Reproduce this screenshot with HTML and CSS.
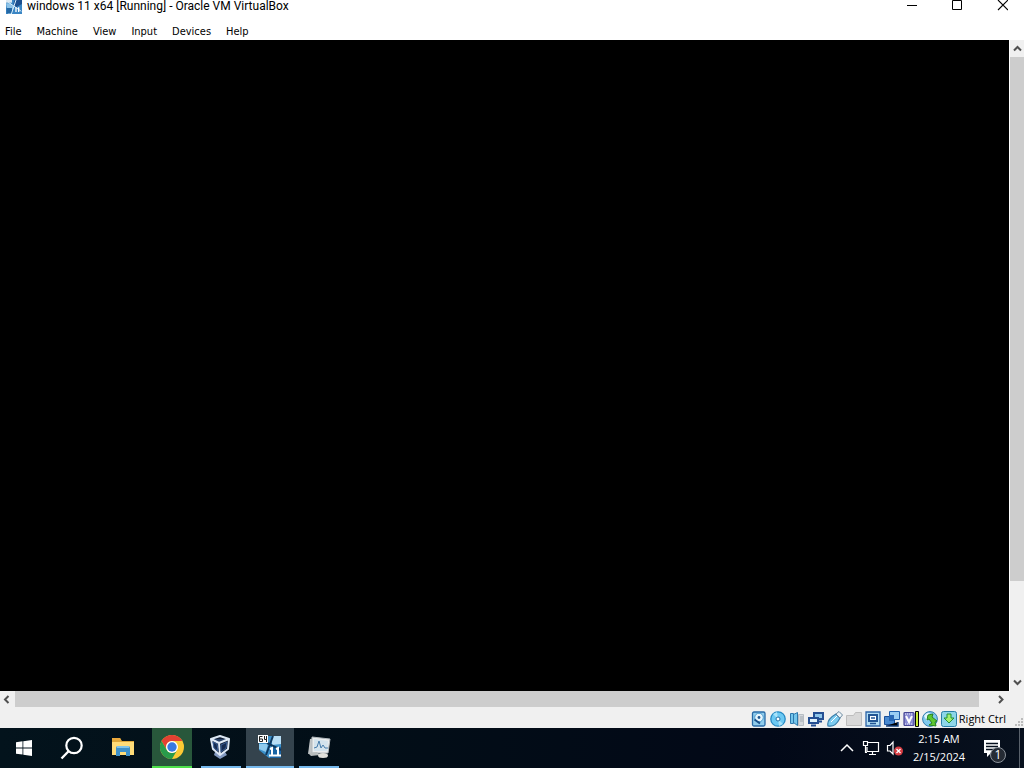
FILE: index.html
```
<!DOCTYPE html>
<html lang="en">
<head>
<meta charset="utf-8">
<title>windows 11 x64 [Running] - Oracle VM VirtualBox</title>
<link rel="stylesheet" href="styles.css">
</head>
<body>
<div class="desktop">
  <header class="titlebar">
    <svg class="title-icon" width="16" height="16" viewBox="0 0 24 24"><path fill="#3b86c4" d="M0 0h24v24H0z"/><path fill="#8fc4e8" d="M0 8h7l5 6-4 10H3z"/><path fill="#1c4f8e" d="M14 0h10v9l-9 5-4-5z"/><path fill="#2468a5" d="M1 15h8v8H1z"/><path stroke="#d8effc" stroke-width="1.500" fill="none" d="M8 24 16 0M3 6l20 14"/><path fill="#dce9f2" d="M0 0h9v7H0z"/><path stroke="#fff" stroke-width="2" d="M15 14v7M19 14v7"/></svg>
    <h1 class="title">windows 11 x64 [Running] - Oracle VM VirtualBox</h1>
    <div class="window-controls">
      <button class="window-button" aria-label="Minimize"><svg width="12" height="12" viewBox="0 0 12 12"><path stroke="#000" d="M1 5.500h10"/></svg></button>
      <button class="window-button" aria-label="Maximize"><svg width="12" height="12" viewBox="0 0 12 12"><path fill="none" stroke="#000" d="M1.500.5h9v9h-9z"/></svg></button>
      <button class="window-button" aria-label="Close"><svg width="12" height="12" viewBox="0 0 12 12"><path stroke="#000" stroke-width="1.100" d="M2 0l10 10M12 0 2 10"/></svg></button>
    </div>
  </header>
  <nav class="menubar">
    <button class="menu-item">File</button>
    <button class="menu-item">Machine</button>
    <button class="menu-item">View</button>
    <button class="menu-item">Input</button>
    <button class="menu-item">Devices</button>
    <button class="menu-item">Help</button>
  </nav>
  <main class="guest">
    <div class="guest-screen"></div>
    <div class="scrollbar vertical">
      <button class="scroll-button" aria-label="Scroll up"><svg width="9" height="7" viewBox="0 0 9 7"><path fill="none" stroke="#505050" stroke-width="2" d="M1 5.500 4.500 2 8 5.500"/></svg></button>
      <div class="track"><div class="thumb"></div></div>
      <button class="scroll-button" aria-label="Scroll down"><svg width="9" height="7" viewBox="0 0 9 7"><path fill="none" stroke="#505050" stroke-width="2" d="M1 1.500 4.500 5 8 1.500"/></svg></button>
    </div>
  </main>
  <div class="scrollbar horizontal">
    <button class="scroll-button" aria-label="Scroll left"><svg width="9" height="9" viewBox="0 0 9 9"><path fill="none" stroke="#505050" stroke-width="2" d="M5.500 1 2 4.500 5.500 8"/></svg></button>
    <div class="track"><div class="thumb"></div></div>
    <button class="scroll-button" aria-label="Scroll right"><svg width="9" height="9" viewBox="0 0 9 9"><path fill="none" stroke="#505050" stroke-width="2" d="M2 1 5.500 4.500 2 8"/></svg></button>
  </div>
  <footer class="statusbar">
    <div class="indicators">
      <svg width="16" height="16" viewBox="0 0 16 16"><rect x="1.500" y="1" width="12.500" height="14" rx="1.500" fill="#8fccec" stroke="#286aa6" stroke-width="1.300"/><circle cx="8" cy="6.500" r="4.300" fill="#e7f6fd" stroke="#4b9bce"/><circle cx="8" cy="6.500" r="1.400" fill="#20568f"/><path stroke="#194f89" stroke-width="2" d="M3.500 8.500 9 12.500"/></svg>
      <svg width="16" height="16" viewBox="0 0 16 16"><circle cx="8" cy="8" r="7.200" fill="#6cc9f3" stroke="#278ac4" stroke-width="1.300"/><path fill="#a9e3fa" d="M8 8 3 3l4-2zM8 8l5 5-4 2z"/><circle cx="8" cy="8" r="2" fill="#fff" stroke="#2071a9"/></svg>
      <svg width="16" height="16" viewBox="0 0 16 16"><path fill="#d4d8dc" stroke="#b7bdc3" d="M9.500 3.500h5v11h-5z"/><path stroke="#a2a9b0" d="M11 6h3M11 8h3M11 10h3"/><path fill="#74c6ec" stroke="#2c78ad" d="M1.500 2.500h3v10h-3zM4.500 3.500l4-2v13l-4-3z"/></svg>
      <svg width="16" height="16" viewBox="0 0 16 16"><path fill="#8fc6ea" stroke="#244f93" stroke-width="2" d="M6 2h9v6H6z"/><path fill="#dff2fc" stroke="#244f93" stroke-width="2" d="M1 7h9v5H1z"/><path stroke="#244f93" stroke-width="2" d="M3 14.500h5M11 10.500h3"/></svg>
      <svg width="16" height="16" viewBox="0 0 16 16"><path fill="#7ccbef" stroke="#397da9" stroke-width="1.200" d="M1 15c-1-4 1-8 8-12l4 4c-3 6-6 9-12 8z"/><path fill="#eef4f8" stroke="#6b89a0" d="m9 3 3-2.500L15.500 4 13 7z"/><path stroke="#fff" d="m4 11 6-6"/></svg>
      <svg width="16" height="16" viewBox="0 0 16 16"><path fill="#d8d8d8" stroke="#bdbdbd" d="M.5 4.500h7l2-3h6v13H.5z"/></svg>
      <svg width="16" height="16" viewBox="0 0 16 16"><path fill="#b2ddf4" stroke="#2e65a8" stroke-width="1.300" d="M1 1h14v14H1z"/><path fill="#fff" stroke="#225594" stroke-width="2" d="M4 4h8v6H4z"/><path stroke="#225594" stroke-width="1.500" d="M5 12.500h6M6 7h4"/></svg>
      <svg width="16" height="16" viewBox="0 0 16 16"><path fill="#4989d0" stroke="#1c5099" d="M.5 5.500h10v8H.5z"/><path fill="#99cdf3" stroke="#1e5fac" d="M5.500.5h10v8h-10z"/><path fill="#2867b4" d="M5 4h5v6H5z"/><path stroke="#163f7b" stroke-width="1.500" d="M2 15h12v-4"/></svg>
      <svg width="16" height="16" viewBox="0 0 16 16"><rect x="1" y="1.500" width="10" height="13" rx="1" fill="#898bd2" stroke="#464594" stroke-width="1.200"/><path stroke="#eeeefa" stroke-dasharray="1 1" d="M2 3h8M2 13h8"/><path fill="none" stroke="#fff" stroke-width="2" d="M3 5l3 6 3-6"/><path fill="#c8ec33" stroke="#000" d="M12.500.5h3v15h-3z"/></svg>
      <svg width="16" height="16" viewBox="0 0 16 16"><circle cx="8" cy="8" r="7.400" fill="#80c9ed" stroke="#327db0"/><path fill="#e1f6fc" d="M2 5c3-4 6-4 6-1L5 10z"/><path fill="#5cc831" stroke="#288222" d="m6 4 5-1-1 3 5 4-2 1 1 4-7-1 3-2-3-4-2 1z"/></svg>
      <svg width="16" height="16" viewBox="0 0 16 16"><rect x=".5" y=".5" width="15" height="15" rx="2" fill="#8dd6e8" stroke="#287fa9"/><path fill="#a5ef70" stroke="#219238" d="M6 3h4v4h3l-5 5-5-5h3z"/></svg>
    </div>
    <span class="host-key">Right Ctrl</span>
    <svg class="grip" width="10" height="10" viewBox="0 0 10 10"><path fill="#bcbcbc" d="M7 0h2v2H7zM4 3h2v2H4zM7 3h2v2H7zM1 6h2v2H1zM4 6h2v2H4zM7 6h2v2H7z"/></svg>
  </footer>
  <div class="taskbar">
    <div class="apps">
      <button class="launcher" aria-label="Start"><svg width="16" height="16" viewBox="0 0 16 16"><path fill="#fff" d="M0 2.200 6.500 1.300v6.200H0zM7.300 1.200 16 0v7.500H7.300zM0 8.400h6.500v6.200L0 13.700zM7.300 8.400H16V16l-8.700-1.200z"/></svg></button>
      <button class="launcher" aria-label="Search"><svg width="24" height="24" viewBox="0 0 24 24"><circle cx="14" cy="9.500" r="7.700" fill="none" stroke="#fff" stroke-width="2.200"/><path stroke="#fff" stroke-width="2.400" d="M8.800 15 1.500 22.500"/></svg></button>
      <button class="app explorer" aria-label="File Explorer"><svg width="24" height="24" viewBox="0 0 24 24"><path fill="#dda73a" d="M1 3h8l2 3h12v14H1z"/><path fill="#ffdc78" d="M1 7h22v13H1z"/><path fill="#edaa3d" d="M1 3h8l1 2H1z"/><path fill="#3e91c9" d="M5 13q0-2 2-2h10q2 0 2 2v8h-4v-4H9v4H5z"/><path fill="#80c4e9" d="M6 11h12v2H6z"/></svg></button>
      <button class="app chrome" aria-label="Google Chrome"><svg width="24" height="24" viewBox="0 0 24 24"><circle cx="12" cy="12" r="12" fill="#fcc934"/><path fill="#e34133" d="M1.600 6A12 12 0 0 1 22.400 6H12a6 6 0 0 0-5.200 9z"/><path fill="#289b4b" d="M1.600 6A12 12 0 0 0 12 24l5.200-9A6 6 0 0 1 6.800 15z"/><circle cx="12" cy="12" r="6" fill="#fff"/><circle cx="12" cy="12" r="4.700" fill="#3979e0"/></svg></button>
      <button class="app" aria-label="Oracle VM VirtualBox Manager"><svg width="24" height="24" viewBox="0 0 24 24"><path fill="#8299c0" d="M6 17h10l2 3-7 4-6-4z"/><path fill="#101f38" stroke="#dce7f4" stroke-width="2" stroke-linejoin="round" d="m11 1 9 3-1 10-8 6-7-6-2-10z"/><path fill="#294267" stroke="#e0ebf8" stroke-width="2" stroke-linejoin="round" d="m2 4 8 4 10-4M10 8l1 12"/><path fill="#152b50" stroke="#3d6298" d="m4 7 4 2 1 7-4-3zM18 7l-6 3v7l5-4z"/></svg></button>
      <button class="app active" aria-label="windows 11 x64"><svg width="24" height="24" viewBox="0 0 24 24"><path fill="#3c91ca" d="M1 1h22v22H11L1 15z"/><path fill="#8fcbef" d="M1 9h9l-2 8-7-3z"/><path fill="#b8def5" d="M14 1h9v8l-9 1z"/><path fill="#1964a4" d="m12 13 11-1v11H12z"/><path stroke="#0e385f" stroke-width="2" d="M8 20 15 1M9 8l14 7"/><path fill="#fff" d="M0 0h10v8H0z"/><path fill="none" stroke="#222" d="M4.500 1.500h-3v5h3v-2.500h-3M6.500 1v3.500h2.500M8.500 1v6"/><path fill="none" stroke="#fff" stroke-width="2" d="m12 14 2-1v7M11 20.500h6M18 14l2-1v7M17 20.500h6"/></svg></button>
      <button class="app" aria-label="System Monitor"><svg width="24" height="24" viewBox="0 0 24 24"><path fill="#bfc4c5" d="m3 4 5-1v14l-7 2z"/><path fill="#e9eced" stroke="#b2b9bd" d="m5 2 18 2-2 14H5z"/><path fill="#d3e3ed" d="m7 4 14 2-1 10H7z"/><path fill="none" stroke="#467cab" d="m7 13 3-1 2-6 2 7 2-3 2 3h3"/><path fill="#b8bdbd" d="m1 18 9-1 3 3-9 1z"/><ellipse cx="16" cy="20.500" rx="5" ry="2.500" fill="#e0e0db"/></svg></button>
    </div>
    <div class="tray">
      <button class="tray-button" aria-label="Show hidden icons"><svg width="14" height="10" viewBox="0 0 14 10"><path fill="none" stroke="#fff" stroke-width="1.500" d="m1 8 6-6 6 6"/></svg></button>
      <button class="tray-button" aria-label="Network"><svg width="18" height="16" viewBox="0 0 18 16"><path fill="none" stroke="#fff" stroke-width="1.200" d="M6 2.500h10.500v9H5V7M10.500 12v2.500M7 14.500h7M1.500 1.500h4v4h-4zM3.500 6v6.500H5"/></svg></button>
      <button class="tray-button" aria-label="Volume"><svg width="18" height="16" viewBox="0 0 18 16"><path fill="none" stroke="#fff" stroke-width="1.200" d="M7 2v12l-3-3H1.500V5.500H4z"/><circle cx="12.500" cy="11" r="4.500" fill="#d53c42"/><path stroke="#fff" stroke-width="1.300" d="m10.500 9 4 4M14.500 9l-4 4"/></svg></button>
      <button class="clock"><span>2:15 AM</span><span>2/15/2024</span></button>
      <button class="notifications" aria-label="Notifications, 1 new"><svg width="18" height="18" viewBox="0 0 18 18"><path fill="#fff" d="M1 1h16v13H8l-4 4v-4H1z"/><path stroke="#07111e" stroke-width="1.300" d="M3 4.500h12M3 7.500h12M3 10.500h8"/></svg><span class="badge">1</span></button>
    </div>
  </div>
</div>
</body>
</html>
```
FILE: styles.css
```
* { box-sizing: border-box; }
body { margin: 0; background: #fff; color: #000; font-family: "Open Sans", "Noto Sans", sans-serif; }
button { margin: 0; padding: 0; border: 0; background: none; color: inherit; font: inherit; display: flex; align-items: center; justify-content: center; }
svg { display: block; flex: none; }
.desktop { display: flex; flex-direction: column; height: 100vh; overflow: hidden; }
.titlebar { flex: none; display: flex; align-items: center; height: 12px; padding-left: 6px; gap: 5px; }
.title { flex: 1; margin: 0; font-family: Roboto, sans-serif; font-size: 12px; line-height: 14px; font-weight: 400; white-space: nowrap; }
.window-controls { display: flex; }
.window-button { width: 45px; height: 12px; }
.menubar { flex: none; display: flex; gap: 15px; height: 28px; padding: 10px 5px 0; font-family: "DejaVu Sans Condensed", "DejaVu Sans", sans-serif; font-stretch: condensed; font-size: 11px; }
.guest { flex: 1; min-height: 0; display: flex; }
.guest-screen { flex: 1; background: #000; }
.scrollbar { flex: none; display: flex; background: #f0f0f0; }
.track { flex: 1; display: flex; }
.thumb { background: #cdcdcd; }
.scroll-button { flex: none; }
.vertical { flex-direction: column; width: 15px; border-left: 1px solid #fff; }
.vertical .scroll-button { height: 17px; }
.vertical .thumb { width: 100%; height: 85%; }
.horizontal { height: 16px; padding-right: 15px; }
.horizontal .scroll-button { width: 15px; }
.horizontal .thumb { width: 98.5%; }
.statusbar { flex: none; display: flex; align-items: center; justify-content: flex-end; height: 21px; background: #f0f0f0; }
.indicators { display: flex; gap: 3px; padding-top: 3px; }
.host-key { margin: 3px 8px 0 2px; font-size: 11px; line-height: 16px; white-space: nowrap; }
.grip { align-self: flex-end; }
.taskbar { flex: none; display: flex; justify-content: space-between; height: 40px; background: linear-gradient(90deg, #03131c, #020e17 35%, #020817 75%, #07101d); color: #fff; }
.apps, .tray { display: flex; }
.launcher { width: 48px; }
.app { width: 40px; margin-right: 9px; border-bottom: 2px solid #76b9ed; }
.explorer { margin-left: 7px; border-bottom-color: transparent; }
.chrome { background: #28573b; border-bottom-color: #4de04b; }
.active { width: 48px; margin: 0 5px 0 -4px; background: #34434d; }
.tray { padding-right: 4px; }
.tray-button { width: 24px; }
.clock { flex-direction: column; width: 64px; font-size: 11px; line-height: 18px; }
.notifications { position: relative; width: 48px; padding-right: 6px; }
.tray::after { content: ""; width: 1px; background: #59616b; }
.badge { position: absolute; left: 19px; top: 19px; width: 16px; height: 16px; border: 1px solid #8b929a; border-radius: 50%; background: #252b34; font-size: 12px; line-height: 14px; text-align: center; }
```
